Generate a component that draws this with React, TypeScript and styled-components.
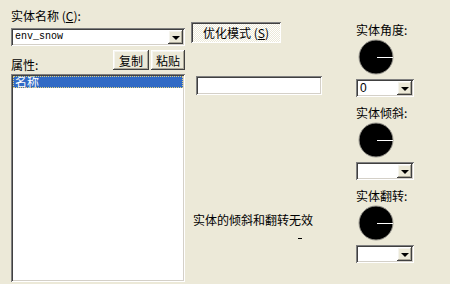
import styled, { createGlobalStyle } from 'styled-components'

const GlobalStyle = createGlobalStyle`
  html, body {
    margin: 0;
    padding: 0;
    background: #ece9d8;
  }
  body {
    font-family: "Noto Sans CJK SC", "DejaVu Sans", sans-serif;
    font-size: 12px;
    color: #000;
  }
`

// 창 전체
const Dialog = styled.div`
  width: 450px;
  height: 284px;
  overflow: hidden;
  background: #ece9d8;
  display: flex;
`

const LeftColumn = styled.div`
  width: 174px;
  margin-left: 11px;
  display: flex;
  flex-direction: column;
`

const MiddleColumn = styled.div`
  width: 140px;
  margin-left: 6px;
  display: flex;
  flex-direction: column;
`

const RightColumn = styled.div`
  width: 60px;
  margin-left: 25px;
  padding-top: 23px;
  display: flex;
  flex-direction: column;
  gap: 9px;
`

const Label = styled.div<{ $top?: number }>`
  height: 14px;
  line-height: 14px;
  font-size: 12px;
  margin-top: ${({ $top }) => $top ?? 0}px;
  white-space: nowrap;
`

// 단축키 밑줄
const Key = styled.span`
  text-decoration: underline;
  text-underline-offset: 1px;
`

/* 클래식 움푹 들어간 테두리 */
const sunken = `
  background: #fff;
  box-shadow: inset 1px 1px #808080, inset -1px -1px #fff,
    inset 2px 2px #404040, inset -2px -2px #d4d0c8;
`

const raised = `
  background: #ece9d8;
  box-shadow: inset -1px -1px #404040, inset 1px 1px #fff,
    inset -2px -2px #aca899, inset 2px 2px #f5f4ee;
`

const Combo = styled.div<{ $width?: number; $top?: number }>`
  ${sunken}
  width: ${({ $width }) => $width ?? 174}px;
  height: 18px;
  margin-top: ${({ $top }) => $top ?? 0}px;
  box-sizing: border-box;
  padding: 2px;
  display: flex;
  align-items: center;
`

const ComboText = styled.div<{ $mono?: boolean }>`
  flex: 1;
  padding-left: 2px;
  font-family: ${({ $mono }) =>
    $mono ? '"Liberation Mono", monospace' : '"Liberation Sans", sans-serif'};
  font-size: ${({ $mono }) => ($mono ? 10 : 12)}px;
  line-height: 14px;
  white-space: nowrap;
`

const DropButton = styled.div`
  ${raised}
  width: 15px;
  height: 14px;
  display: flex;
  align-items: center;
  justify-content: center;
`

const Arrow = styled.div`
  width: 0;
  height: 0;
  border-left: 4px solid transparent;
  border-right: 4px solid transparent;
  border-top: 4px solid #000;
  margin-top: 1px;
`

const ToolRow = styled.div`
  display: flex;
  align-items: flex-end;
  margin-top: 4px;
  height: 20px;
`

const ToolLabel = styled.div`
  flex: 1;
  font-size: 12px;
  line-height: 14px;
  margin-bottom: -2px;
`

const PushButton = styled.div<{ $width: number }>`
  ${raised}
  width: ${({ $width }) => $width}px;
  height: 20px;
  margin-left: 2px;
  display: flex;
  align-items: center;
  justify-content: center;
  font-size: 12px;
`

const ListBox = styled.div`
  ${sunken}
  margin-top: 4px;
  height: 208px;
  box-sizing: border-box;
  padding: 2px;
`

const ListRow = styled.div<{ $selected?: boolean }>`
  height: 12px;
  line-height: 12px;
  padding-left: 2px;
  font-size: 12px;
  background: ${({ $selected }) => ($selected ? '#316ac5' : 'transparent')};
  color: ${({ $selected }) => ($selected ? '#fff' : '#000')};
  outline: ${({ $selected }) => ($selected ? '1px dotted #e0d080' : 'none')};
  outline-offset: -1px;
`

const ToggleButton = styled.div`
  margin-top: 22px;
  width: 90px;
  height: 21px;
  box-sizing: border-box;
  padding-left: 12px;
  display: flex;
  align-items: center;
  font-size: 12px;
  white-space: pre;
  background: repeating-conic-gradient(#fff 0 25%, #ece9d8 0 50%) 0 0 / 2px 2px;
  box-shadow: inset 1px 1px #808080, inset -1px -1px #fff,
    inset 2px 2px #404040;
`

const TextInput = styled.div`
  ${sunken}
  margin-top: 33px;
  margin-left: 5px;
  width: 126px;
  height: 19px;
`

const Note = styled.div`
  margin-top: 118px;
  margin-left: 2px;
  font-size: 12px;
  line-height: 14px;
  white-space: nowrap;
`

const Dash = styled.div`
  margin-top: 11px;
  margin-left: 107px;
  width: 4px;
  height: 1px;
  background: #000;
`

const DialGroup = styled.div`
  display: flex;
  flex-direction: column;
`

const DialWrap = styled.div`
  margin-top: 2px;
  margin-left: 2px;
  width: 36px;
  height: 36px;
`

function Dial() {
  return (
    <DialWrap>
      <svg width="36" height="36" viewBox="0 0 36 36">
        <circle cx="18" cy="18" r="17" fill="#000" stroke="#9a9890" strokeWidth="1" />
        <line x1="19" y1="18.5" x2="35" y2="18.5" stroke="#fff" strokeWidth="1" />
      </svg>
    </DialWrap>
  )
}

function SmallCombo({ value }: { value: string }) {
  return (
    <Combo $width={58} $top={4}>
      <ComboText>{value}</ComboText>
      <DropButton>
        <Arrow />
      </DropButton>
    </Combo>
  )
}

const dials = [
  { label: '实体角度:', value: '0' },
  { label: '实体倾斜:', value: '' },
  { label: '实体翻转:', value: '' },
]

function App() {
  return (
    <>
      <GlobalStyle />
      <Dialog>
        <LeftColumn>
          <Label $top={9}>
            实体名称 (<Key>C</Key>):
          </Label>
          <Combo $top={5}>
            <ComboText $mono>env_snow</ComboText>
            <DropButton>
              <Arrow />
            </DropButton>
          </Combo>
          <ToolRow>
            <ToolLabel>属性:</ToolLabel>
            <PushButton $width={36}>复制</PushButton>
            <PushButton $width={34}>粘贴</PushButton>
          </ToolRow>
          <ListBox>
            <ListRow $selected>名称</ListRow>
          </ListBox>
        </LeftColumn>

        <MiddleColumn>
          <ToggleButton>
            优化模式 (<Key>S</Key>)
          </ToggleButton>
          <TextInput />
          <Note>实体的倾斜和翻转无效</Note>
          <Dash />
        </MiddleColumn>

        <RightColumn>
          {dials.map((d) => (
            <DialGroup key={d.label}>
              <Label>{d.label}</Label>
              <Dial />
              <SmallCombo value={d.value} />
            </DialGroup>
          ))}
        </RightColumn>
      </Dialog>
    </>
  )
}

export default App
